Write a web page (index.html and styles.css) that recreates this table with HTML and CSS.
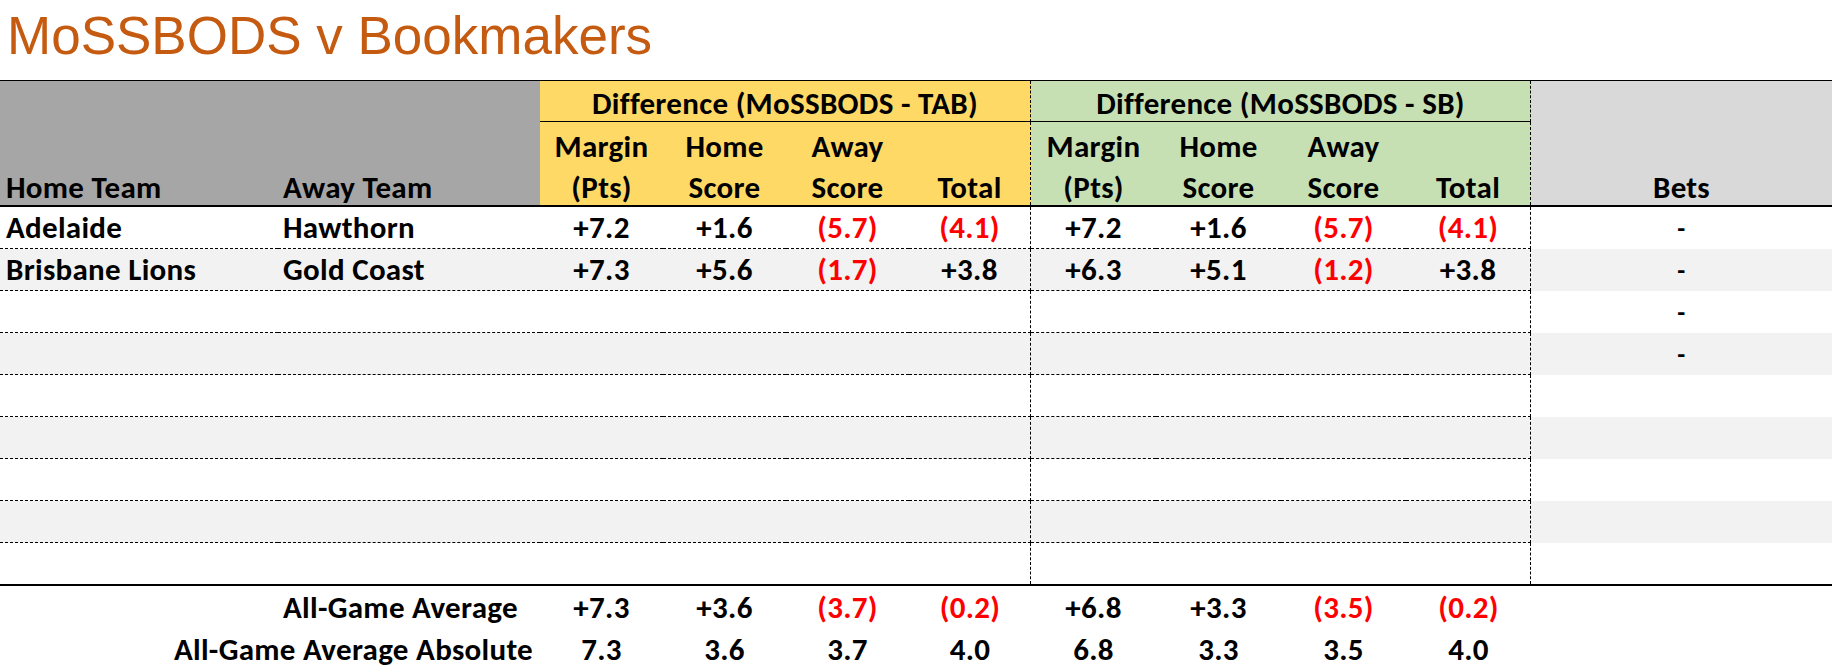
FILE: index.html
```html
<!DOCTYPE html>
<html lang="en">
<head>
<meta charset="utf-8">
<title>MoSSBODS v Bookmakers</title>
<link rel="stylesheet" href="styles.css">
</head>
<body>
<div class="page">
  <h1 class="title">MoSSBODS v Bookmakers</h1>
  <div class="sheet">
    <div class="head">
      <div class="h-name c1">Home Team</div>
      <div class="h-name c2">Away Team</div>
      <div class="h-group tab">Difference (MoSSBODS - TAB)</div>
      <div class="h-group sb">Difference (MoSSBODS - SB)</div>
      <div class="h-bets">Bets</div>
      <div class="h-sub tab">Margin<br>(Pts)</div>
      <div class="h-sub tab">Home<br>Score</div>
      <div class="h-sub tab">Away<br>Score</div>
      <div class="h-sub tab one sep">Total</div>
      <div class="h-sub sb">Margin<br>(Pts)</div>
      <div class="h-sub sb">Home<br>Score</div>
      <div class="h-sub sb">Away<br>Score</div>
      <div class="h-sub sb one sep">Total</div>
    </div>
    <div class="body">
      <div class="row">
        <div class="cell name">Adelaide</div><div class="cell name">Hawthorn</div>
        <div class="cell num">+7.2</div><div class="cell num">+1.6</div><div class="cell num neg">(5.7)</div><div class="cell num neg sep">(4.1)</div>
        <div class="cell num">+7.2</div><div class="cell num">+1.6</div><div class="cell num neg">(5.7)</div><div class="cell num neg sep">(4.1)</div>
        <div class="bet">-</div>
      </div>
      <div class="row alt">
        <div class="cell name">Brisbane Lions</div><div class="cell name">Gold Coast</div>
        <div class="cell num">+7.3</div><div class="cell num">+5.6</div><div class="cell num neg">(1.7)</div><div class="cell num sep">+3.8</div>
        <div class="cell num">+6.3</div><div class="cell num">+5.1</div><div class="cell num neg">(1.2)</div><div class="cell num sep">+3.8</div>
        <div class="bet">-</div>
      </div>
      <div class="row">
        <div class="cell"></div><div class="cell"></div>
        <div class="cell"></div><div class="cell"></div><div class="cell"></div><div class="cell sep"></div>
        <div class="cell"></div><div class="cell"></div><div class="cell"></div><div class="cell sep"></div>
        <div class="bet">-</div>
      </div>
      <div class="row alt">
        <div class="cell"></div><div class="cell"></div>
        <div class="cell"></div><div class="cell"></div><div class="cell"></div><div class="cell sep"></div>
        <div class="cell"></div><div class="cell"></div><div class="cell"></div><div class="cell sep"></div>
        <div class="bet">-</div>
      </div>
      <div class="row">
        <div class="cell"></div><div class="cell"></div>
        <div class="cell"></div><div class="cell"></div><div class="cell"></div><div class="cell sep"></div>
        <div class="cell"></div><div class="cell"></div><div class="cell"></div><div class="cell sep"></div>
        <div class="bet"></div>
      </div>
      <div class="row alt">
        <div class="cell"></div><div class="cell"></div>
        <div class="cell"></div><div class="cell"></div><div class="cell"></div><div class="cell sep"></div>
        <div class="cell"></div><div class="cell"></div><div class="cell"></div><div class="cell sep"></div>
        <div class="bet"></div>
      </div>
      <div class="row">
        <div class="cell"></div><div class="cell"></div>
        <div class="cell"></div><div class="cell"></div><div class="cell"></div><div class="cell sep"></div>
        <div class="cell"></div><div class="cell"></div><div class="cell"></div><div class="cell sep"></div>
        <div class="bet"></div>
      </div>
      <div class="row alt">
        <div class="cell"></div><div class="cell"></div>
        <div class="cell"></div><div class="cell"></div><div class="cell"></div><div class="cell sep"></div>
        <div class="cell"></div><div class="cell"></div><div class="cell"></div><div class="cell sep"></div>
        <div class="bet"></div>
      </div>
      <div class="row last">
        <div class="cell"></div><div class="cell"></div>
        <div class="cell"></div><div class="cell"></div><div class="cell"></div><div class="cell sep"></div>
        <div class="cell"></div><div class="cell"></div><div class="cell"></div><div class="cell sep"></div>
        <div class="bet"></div>
      </div>
    </div>
    <div class="foot">
      <div class="frow">
        <div class="flabel avg">All-Game Average</div>
        <div class="fnum">+7.3</div><div class="fnum">+3.6</div><div class="fnum neg">(3.7)</div><div class="fnum neg">(0.2)</div>
        <div class="fnum">+6.8</div><div class="fnum">+3.3</div><div class="fnum neg">(3.5)</div><div class="fnum neg">(0.2)</div>
        <div class="fnum"></div>
      </div>
      <div class="frow">
        <div class="flabel abs">All-Game Average Absolute</div>
        <div class="fnum">7.3</div><div class="fnum">3.6</div><div class="fnum">3.7</div><div class="fnum">4.0</div>
        <div class="fnum">6.8</div><div class="fnum">3.3</div><div class="fnum">3.5</div><div class="fnum">4.0</div>
        <div class="fnum"></div>
      </div>
    </div>
  </div>
</div>
</body>
</html>
```
FILE: styles.css
```css
* { box-sizing: border-box; }
html, body { margin: 0; padding: 0; background: #fff; }
body { width: 1832px; height: 669px; overflow: hidden; }

.page {
  --cols: 278px 262px 123px 123px 123px 122px 125px 125px 125px 125px 301px;
  font-family: Carlito, Calibri, Lato, "Liberation Sans", sans-serif;
  font-weight: 700;
  font-size: 31px;
  letter-spacing: 0.3px;
  color: #000;
}

.title {
  margin: 0;
  height: 80px;
  padding: 9px 0 0 7px;
  font-family: "Liberation Sans", Arial, sans-serif;
  font-weight: 400;
  font-size: 53px;
  line-height: 53px;
  letter-spacing: 0;
  color: #C55A11;
}

/* header */
.head {
  display: grid;
  grid-template-columns: var(--cols);
  grid-template-rows: 41px 83px;
  border-top: 1px solid #000;
  border-bottom: 2px solid #000;
}
.h-name {
  grid-row: 1 / span 2;
  background: #A6A6A6;
  padding: 86px 0 0 5px;
  line-height: 41px;
  white-space: nowrap;
}
.h-name.c1 { grid-column: 1; padding-left: 6px; }
.h-name.c2 { grid-column: 2; }
.h-group {
  grid-row: 1;
  display: flex;
  align-items: center;
  justify-content: center;
  padding-top: 4px;
  border-bottom: 1px solid #000;
  border-right: 1px dashed #000;
}
.h-group.tab { grid-column: 3 / span 4; background: #FFD966; }
.h-group.sb { grid-column: 7 / span 4; background: #C6E0B4; }
.h-bets {
  grid-column: 11;
  grid-row: 1 / span 2;
  background: #D9D9D9;
  text-align: center;
  padding-top: 86px;
  line-height: 41px;
}
.h-sub {
  grid-row: 2;
  text-align: center;
  padding-top: 4px;
  line-height: 41px;
}
.h-sub.one { padding-top: 45px; }
.h-sub.tab { background: #FFD966; }
.h-sub.sb { background: #C6E0B4; }
.sep { border-right: 1px dashed #000; }

/* body */
.body { border-bottom: 2px solid #000; }
.row {
  display: grid;
  grid-template-columns: var(--cols);
  height: 42px;
}
.row.alt { background: #F2F2F2; }
.row.last { height: 41px; }
.cell {
  border-bottom: 1px dashed #000;
  display: flex;
  align-items: center;
  justify-content: center;
  line-height: 1;
}
.row.last .cell { border-bottom: 0; }
.cell.name { justify-content: flex-start; padding-left: 5px; }
.row .cell.name:first-child { padding-left: 6px; }
.bet {
  display: flex;
  align-items: center;
  justify-content: center;
  font-size: 26px;
}
.neg { color: #FF0000; }

/* footer */
.frow {
  display: grid;
  grid-template-columns: var(--cols);
  height: 42px;
  align-items: center;
}
.flabel { grid-column: 1 / span 2; white-space: nowrap; }
.flabel.avg { padding-left: 283px; }
.flabel.abs { text-align: right; padding-right: 7px; }
.fnum { text-align: center; }
```
